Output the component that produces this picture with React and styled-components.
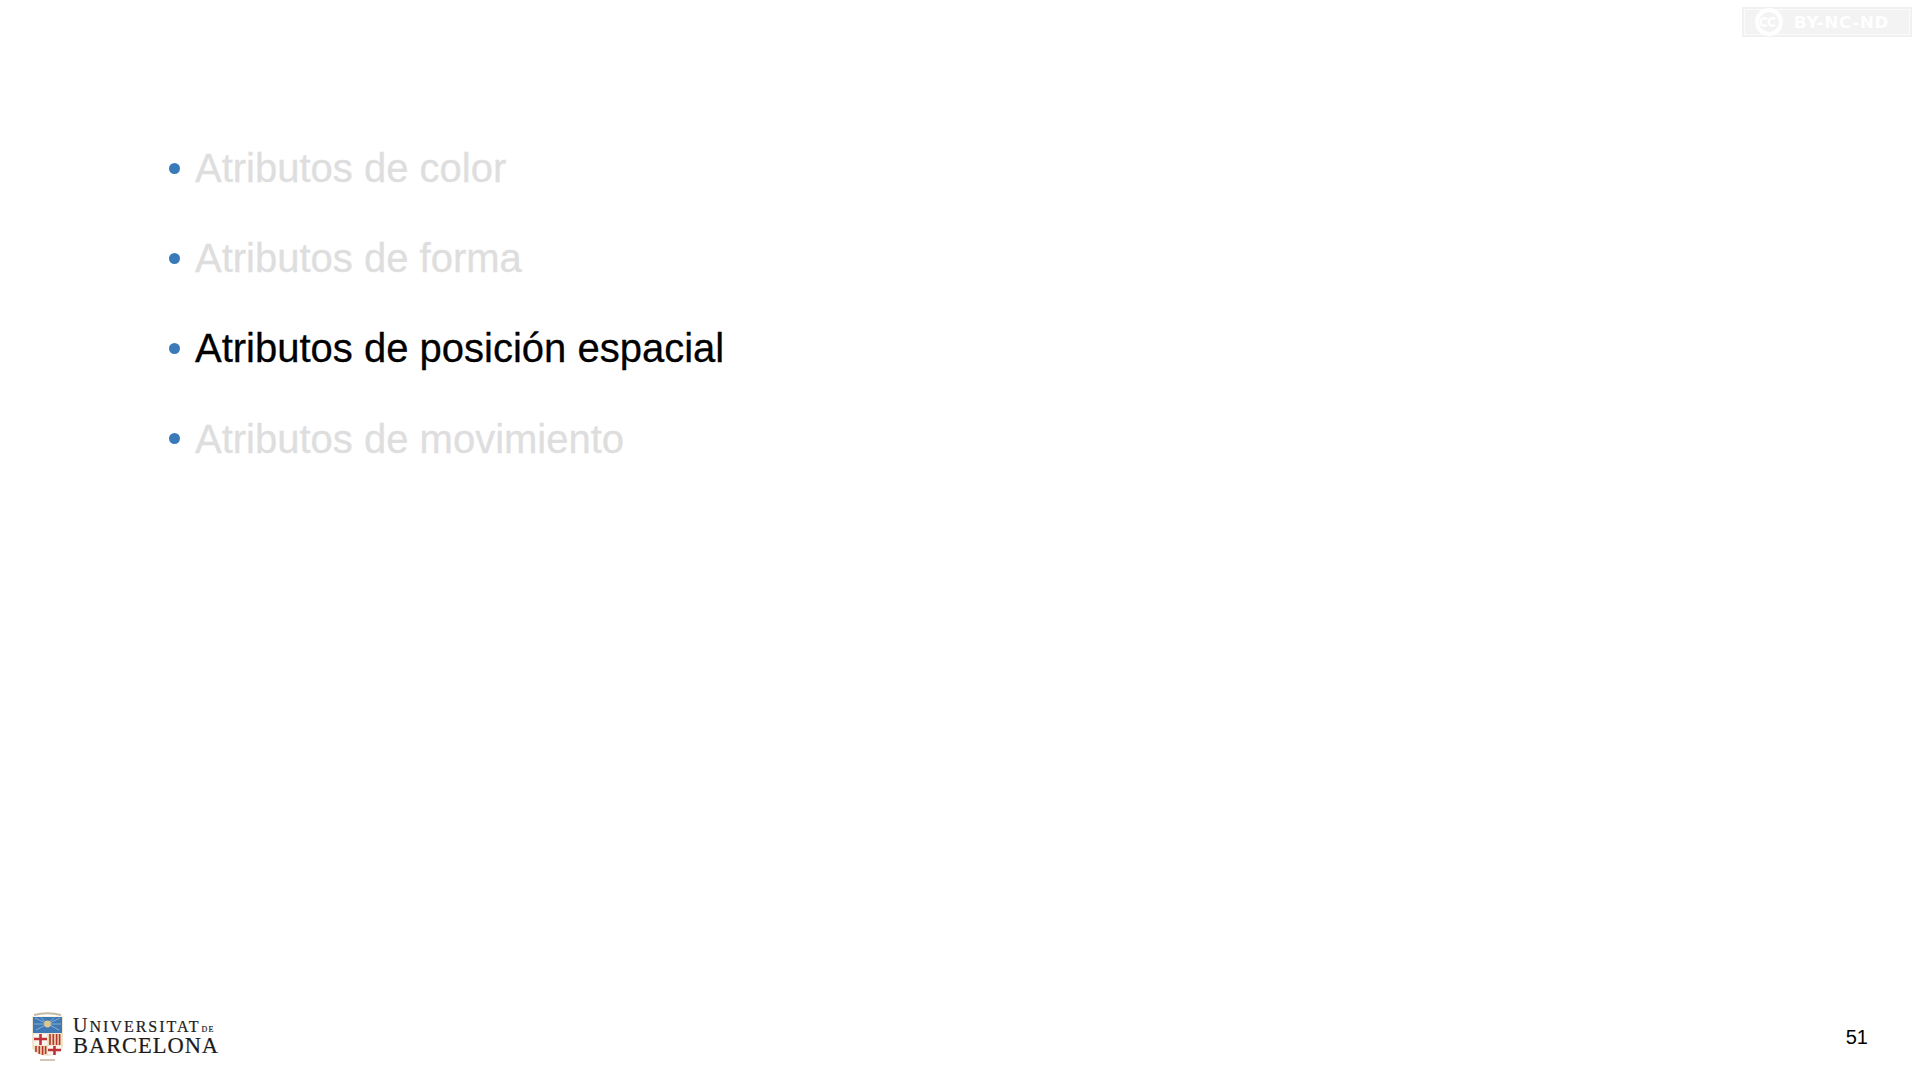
import React from "react";
import styled, { createGlobalStyle } from "styled-components";

const Global = createGlobalStyle`
  html, body { margin: 0; padding: 0; background: #fff; }
  body { font-family: "Liberation Sans", Arial, sans-serif; }
`;

const Slide = styled.div`
  width: 1920px;
  height: 1080px;
  display: flex;
  flex-direction: column;
  overflow: hidden;
  background: #fff;
`;

const TopBar = styled.header`
  display: flex;
  justify-content: flex-end;
  padding: 7px 8px 0 0;
  height: 37px;
  box-sizing: border-box;
`;

const Badge = styled.div`
  width: 170px;
  height: 30px;
  box-sizing: border-box;
  display: flex;
  align-items: center;
  gap: 9px;
  padding-left: 9px;
  background: #f3f3f3;
  border: 2px solid #f1f1f1;
  box-shadow: inset 0 0 0 1px #fbfbfb;
`;

const BadgeText = styled.span`
  font-family: "DejaVu Sans", sans-serif;
  font-weight: 700;
  font-size: 16.5px;
  letter-spacing: 0.8px;
  color: #fff;
`;

const List = styled.ul`
  list-style: none;
  margin: 0;
  padding: 108px 0 0 169px;
  display: flex;
  flex-direction: column;
  gap: 44.2px;
  flex: 1;
`;

const Item = styled.li`
  display: flex;
  align-items: center;
  gap: 15px;
  height: 46px;
  font-size: 40px;
  line-height: 46px;
  color: ${(p) => (p.$active ? "#000" : "#dedede")};
  -webkit-text-stroke: 0.3px currentColor;
  white-space: nowrap;
`;

const Bullet = styled.span`
  width: 11px;
  height: 11px;
  border-radius: 50%;
  background: #3a7ab8;
  flex: none;
`;

const Footer = styled.footer`
  display: flex;
  align-items: center;
  justify-content: space-between;
  padding: 0 52px 17px 31px;
`;

const Logo = styled.div`
  display: flex;
  align-items: center;
  gap: 9px;
`;

const Wordmark = styled.div`
  display: flex;
  flex-direction: column;
  font-family: "Liberation Serif", serif;
  color: #1c1c1c;
  line-height: 1;
  -webkit-text-stroke: 0.2px currentColor;
  padding-bottom: 3px;
`;

const TopLine = styled.div`
  display: flex;
  align-items: baseline;
  font-size: 20px;
  letter-spacing: 2px;
  height: 20px;
`;

const SmallCaps = styled.span`
  font-size: 16px;
`;

const De = styled.span`
  font-size: 8px;
  letter-spacing: 1px;
  margin-left: 1px;
`;

const BottomLine = styled.div`
  font-size: 22.5px;
  letter-spacing: 0.95px;
  height: 21px;
`;

const PageNumber = styled.span`
  font-size: 20px;
  color: #000;
`;

const CcMark = () => (
  <svg width="32" height="28" viewBox="0 0 32 28">
    <circle cx="16" cy="14" r="12" fill="#f3f3f3" stroke="#fff" strokeWidth="4" />
    <path d="M14 11.2a3.8 3.8 0 1 0 0 5.6M22 11.2a3.8 3.8 0 1 0 0 5.6" fill="none" stroke="#fff" strokeWidth="2.4" />
  </svg>
);

const Shield = () => (
  <svg width="33" height="52" viewBox="0 0 33 52">
    <path d="M3 4Q16.5 0.5 30 4" fill="none" stroke="#c4b9a2" strokeWidth="2.2" />
    <path d="M1 5.5H32V35Q32 43 16.5 45Q1 43 1 35Z" fill="#efe6d2" />
    <rect x="2" y="6" width="29" height="16" fill="#3f78b5" />
    <g stroke="#9dbcd6" strokeWidth="0.8">
      <path d="M16.5 13L4 7M16.5 13L10 6.5M16.5 13L23 6.5M16.5 13L29 7M16.5 13L3 13M16.5 13L30 13M16.5 13L5 19M16.5 13L28 19" />
    </g>
    <circle cx="16.5" cy="13" r="3.4" fill="#dcc88e" />
    <rect x="3" y="23" width="13" height="11" fill="#fbf7f0" />
    <path d="M9.5 23V34M3 28H16" stroke="#bf3037" strokeWidth="2.6" />
    <rect x="17" y="23" width="13" height="11" fill="#ecd9a8" />
    <path d="M19 23V34M22.3 23V34M25.6 23V34M28.6 23V34" stroke="#b93139" strokeWidth="1.6" />
    <path d="M3 35H16V43Q12 44.5 9 43.5Q5 42 3 38Z" fill="#ecd9a8" />
    <path d="M5 35V41M8.3 35V43M11.6 35V44M14.6 35V43" stroke="#b93139" strokeWidth="1.6" />
    <path d="M17 35H30V38Q28 42 24 43.5Q20 44 17 43Z" fill="#fbf7f0" />
    <path d="M23.5 35V44M17 39H30" stroke="#bf3037" strokeWidth="2.6" />
    <path d="M9 49H24" stroke="#c4b9a2" strokeWidth="1.6" />
  </svg>
);

export default function App() {
  const items = [
    { t: "Atributos de color" },
    { t: "Atributos de forma" },
    { t: "Atributos de posición espacial", active: true },
    { t: "Atributos de movimiento" },
  ];
  return (
    <Slide>
      <Global />
      <TopBar>
        <Badge>
          <CcMark />
          <BadgeText>BY-NC-ND</BadgeText>
        </Badge>
      </TopBar>
      <List>
        {items.map((i) => (
          <Item key={i.t} $active={i.active}>
            <Bullet />
            {i.t}
          </Item>
        ))}
      </List>
      <Footer>
        <Logo>
          <Shield />
          <Wordmark>
            <TopLine>
              U<SmallCaps>NIVERSITAT</SmallCaps>
              <De>DE</De>
            </TopLine>
            <BottomLine>BARCELONA</BottomLine>
          </Wordmark>
        </Logo>
        <PageNumber>51</PageNumber>
      </Footer>
    </Slide>
  );
}
